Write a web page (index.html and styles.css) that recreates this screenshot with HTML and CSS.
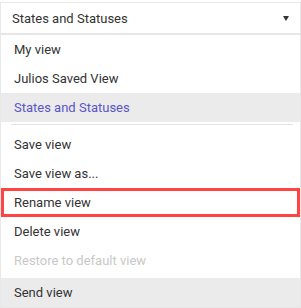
FILE: index.html
```html
<!DOCTYPE html>
<html>
<head>
<meta charset="utf-8">
<link rel="stylesheet" href="styles.css">
</head>
<body>
<div class="wrap">
  <div class="select">
    <span class="select-label">States and Statuses</span>
    <span class="caret"></span>
  </div>
  <ul class="menu">
    <li class="item">My view</li>
    <li class="item">Julios Saved View</li>
    <li class="item active">States and Statuses</li>
    <li class="sep"></li>
    <li class="item">Save view</li>
    <li class="item">Save view as...</li>
    <li class="item marked">Rename view</li>
    <li class="item">Delete view</li>
    <li class="item disabled">Restore to default view</li>
    <li class="item hover">Send view</li>
  </ul>
</div>
</body>
</html>
```
FILE: styles.css
```css
html, body {
  margin: 0;
  padding: 0;
  background: #ffffff;
}
body {
  font-family: Roboto, "Liberation Sans", sans-serif;
  font-size: 13px;
  color: #333333;
}
.wrap {
  width: 301px;
  padding-top: 2px;
}
.select {
  box-sizing: border-box;
  border: 1px solid #e8e8e8;
  border-bottom: 2px solid #e6e6e6;
  display: flex;
  align-items: center;
  justify-content: space-between;
  padding: 0 11px 0 11px;
  height: 33px;
}
.caret {
  width: 0;
  height: 0;
  border-left: 3.5px solid transparent;
  border-right: 3.5px solid transparent;
  border-top: 5px solid #333333;
  margin-top: 1px;
}
.menu {
  list-style: none;
  margin: 0;
  padding: 0;
  border-left: 1px solid #e8e8e8;
  border-right: 1px solid #e8e8e8;
  border-bottom: 1px solid #e8e8e8;
}
.item {
  height: 29px;
  display: flex;
  align-items: center;
  padding-left: 13px;
  box-sizing: border-box;
}
.item.active {
  background: #ebebeb;
  color: #5a55c9;
}
.sep {
  height: 1px;
  margin: 2px 7px 5px 10px;
  background: #e3e3e3;
}
.item.marked {
  box-shadow: inset 0 0 0 3px #ff4444;
}
.item.disabled {
  color: #c8c8c8;
}
.item.hover {
  background: #ebebeb;
  margin-top: 3px;
}
```
